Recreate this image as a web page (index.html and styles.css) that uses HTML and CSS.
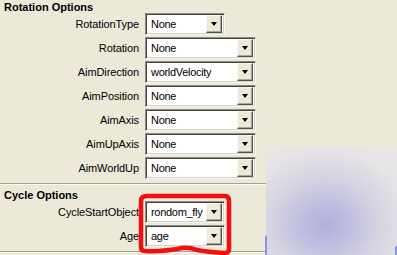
FILE: index.html
```html
<!DOCTYPE html>
<html>
<head>
<meta charset="utf-8">
<link rel="stylesheet" href="styles.css">
</head>
<body>
<div class="panel">
  <div class="heading first">Rotation Options</div>
  <div class="rows">
    <div class="row"><span class="label">RotationType</span><div class="combo short"><span class="val">None</span><span class="btn"><i></i></span></div></div>
    <div class="row"><span class="label">Rotation</span><div class="combo"><span class="val">None</span><span class="btn"><i></i></span></div></div>
    <div class="row"><span class="label">AimDirection</span><div class="combo"><span class="val">worldVelocity</span><span class="btn"><i></i></span></div></div>
    <div class="row"><span class="label">AimPosition</span><div class="combo"><span class="val">None</span><span class="btn"><i></i></span></div></div>
    <div class="row"><span class="label">AimAxis</span><div class="combo"><span class="val">None</span><span class="btn"><i></i></span></div></div>
    <div class="row"><span class="label">AimUpAxis</span><div class="combo"><span class="val">None</span><span class="btn"><i></i></span></div></div>
    <div class="row"><span class="label">AimWorldUp</span><div class="combo"><span class="val">None</span><span class="btn"><i></i></span></div></div>
  </div>
  <div class="sep"></div>
  <div class="heading second">Cycle Options</div>
  <div class="rows">
    <div class="row"><span class="label">CycleStartObject</span><div class="combo short"><span class="val">rondom_fly</span><span class="btn"><i></i></span></div></div>
    <div class="row"><span class="label">Age</span><div class="combo short"><span class="val">age</span><span class="btn"><i></i></span></div></div>
  </div>
  <div class="sep bottom"></div>
</div>
<div class="blur"></div>
<span class="wiggle w1"></span>
<span class="wiggle w2"></span>
<svg class="mark" width="100" height="66" viewBox="0 0 100 66">
  <path d="M4 8 Q4 3 10 3 L88 3 Q92 3 92 8 L92 56 Q92 60 88 60 Q70 59 60 57 Q52 54 45 55 Q25 59 8 58 Q4 58 4 54 Z" fill="none" stroke="#f01010" stroke-width="4.5" stroke-linejoin="round"/>
</svg>
</body>
</html>
```
FILE: styles.css
```css
html, body {
  margin: 0;
  padding: 0;
}
body {
  width: 397px;
  height: 255px;
  overflow: hidden;
  background: #ece9d8;
  font-family: "Liberation Sans", Arial, sans-serif;
  font-size: 11px;
  color: #000;
  position: relative;
}
.panel {
  display: flex;
  flex-direction: column;
}
.heading {
  font-weight: bold;
  line-height: 11px;
  padding-left: 4px;
}
.heading.first {
  padding-top: 2px;
  height: 11px;
}
.heading.second {
  padding-top: 5px;
  height: 11px;
}
.rows {
  display: flex;
  flex-direction: column;
  gap: 2px;
}
.row {
  display: grid;
  grid-template-columns: 139px auto;
  column-gap: 6px;
  align-items: center;
  height: 22px;
}
.label {
  text-align: right;
  white-space: nowrap;
  letter-spacing: -0.1px;
}
.combo {
  width: 111px;
  height: 22px;
  box-sizing: border-box;
  background: #fff;
  border: 1px solid;
  border-color: #8e8c84 #f6f5ef #f6f5ef #8e8c84;
  box-shadow: inset 1px 1px 0 #44423c, inset -1px -1px 0 #d6d3c6;
  display: flex;
  align-items: center;
  padding: 2px 2px 2px 5px;
}
.combo.short {
  width: 80px;
}
.val {
  flex: 1;
  white-space: nowrap;
  letter-spacing: -0.3px;
  font-size: 11px;
}
.btn {
  flex: none;
  width: 16px;
  height: 18px;
  box-sizing: border-box;
  background: #ece9d8;
  border: 1px solid;
  border-color: #f8f7f2 #55534c #55534c #f8f7f2;
  box-shadow: inset -1px -1px 0 #a6a39a;
  display: flex;
  align-items: center;
  justify-content: center;
}
.btn i {
  width: 0;
  height: 0;
  border-left: 3.5px solid transparent;
  border-right: 3.5px solid transparent;
  border-top: 4px solid #000;
}
.sep {
  margin-top: 4px;
  height: 0;
  border-top: 1px solid #a3a196;
  border-bottom: 1px solid #fbfaf5;
}
.sep.bottom {
  margin-top: 4px;
}
.blur {
  position: absolute;
  left: 266px;
  top: 147px;
  width: 131px;
  height: 108px;
  background: radial-gradient(ellipse 75% 80% at 45% 72%, #b2afdc 0%, #c0bee0 25%, #d5d4e2 55%, #e5e3e5 85%, #e9e7e4 100%);
}
.wiggle {
  position: absolute;
  background: #7a82ea;
  border-radius: 2px;
  opacity: 0.85;
}
.w1 {
  left: 265px;
  top: 236px;
  width: 2px;
  height: 19px;
}
.w2 {
  left: 395px;
  top: 246px;
  width: 2px;
  height: 9px;
}
.mark {
  position: absolute;
  left: 137px;
  top: 193px;
}
```
